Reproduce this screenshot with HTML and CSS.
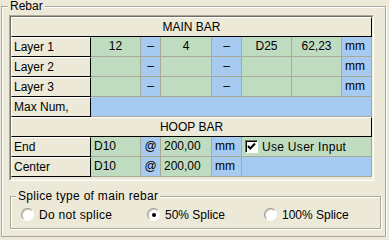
FILE: index.html
```html
<!DOCTYPE html>
<html>
<head>
  <title>Rebar</title>
  <link rel="stylesheet" href="styles.css">
</head>
<body>
  <div class="group rebar">
    <span class="caption">Rebar</span>

    <div class="grid">
      <div class="grid-in">
        <div class="row"><div class="head">MAIN BAR</div></div>

        <div class="row">
          <div class="lbl">Layer 1</div>
          <div class="c g">12</div>
          <div class="c b">–</div>
          <div class="c g">4</div>
          <div class="c b">–</div>
          <div class="c g">D25</div>
          <div class="c g">62,23</div>
          <div class="c b l">mm</div>
        </div>

        <div class="row">
          <div class="lbl">Layer 2</div>
          <div class="c g"></div>
          <div class="c b">–</div>
          <div class="c g"></div>
          <div class="c b">–</div>
          <div class="c g"></div>
          <div class="c g"></div>
          <div class="c b l">mm</div>
        </div>

        <div class="row">
          <div class="lbl">Layer 3</div>
          <div class="c g"></div>
          <div class="c b">–</div>
          <div class="c g"></div>
          <div class="c b">–</div>
          <div class="c g"></div>
          <div class="c g"></div>
          <div class="c b l">mm</div>
        </div>

        <div class="row">
          <div class="lbl">Max Num,</div>
          <div class="c b wide"></div>
        </div>

        <div class="row"><div class="head">HOOP BAR</div></div>

        <div class="row">
          <div class="lbl">End</div>
          <div class="c g l">D10</div>
          <div class="c b">@</div>
          <div class="c g l">200,00</div>
          <div class="c b l">mm</div>
          <div class="c g rest chk">
            <span class="box">
              <svg width="9" height="9" viewBox="0 0 9 9"><path d="M1 4 L3.3 6.5 L8 1.5" fill="none" stroke="#000" stroke-width="2"/></svg>
            </span>
            <span class="wide-text">Use User Input</span>
          </div>
        </div>

        <div class="row">
          <div class="lbl">Center</div>
          <div class="c g l">D10</div>
          <div class="c b">@</div>
          <div class="c g l">200,00</div>
          <div class="c b l">mm</div>
          <div class="c b rest"></div>
        </div>
      </div>
    </div>

    <!-- Splice type -->
    <div class="group splice">
      <span class="caption wide-text">Splice type of main rebar</span>
      <div class="options">
        <div class="opt"><span class="radio"></span><span class="wide-text">Do not splice</span></div>
        <div class="opt"><span class="radio on"></span><span>50% Splice</span></div>
        <div class="opt"><span class="radio"></span><span>100% Splice</span></div>
      </div>
    </div>
  </div>
</body>
</html>
```

FILE: styles.css
```css
body {
  margin: 0;
  background-color: #ece9d8;
  font-family: "Liberation Sans", Arial, sans-serif;
  font-size: 12px;
  color: #000;
}

.wide-text {
  letter-spacing: 0.3px;
}

.group {
  position: relative;
  box-sizing: border-box;
  border: 1px solid #aca899;
  box-shadow: 1px 1px 0 #fff, inset 1px 1px 0 #fff;
}

.caption {
  position: absolute;
  top: -8px;
  left: 6px;
  padding: 0 2px;
  line-height: 14px;
  background-color: #ece9d8;
}

.rebar {
  width: 385px;
  height: 231px;
  margin: 6px 0 0 1px;
  padding: 8px 0 0 7px;
}

.grid {
  box-sizing: border-box;
  width: 365px;
  height: 166px;
  border: 1px solid;
  border-color: #aca899 #fff #fff #aca899;
}

.grid-in {
  box-sizing: border-box;
  height: 100%;
  border: 1px solid;
  border-color: #716f64 #f1efe2 #f1efe2 #716f64;
}

.row {
  display: grid;
  grid-template-columns: 80px 50px 20px 51px 30px 50px 50px 30px;
  height: 20px;
}

.row > div {
  box-sizing: border-box;
  line-height: 18px;
  white-space: nowrap;
  overflow: hidden;
}

.lbl, .head {
  background-color: #ece9d8;
  border-top: 1px solid #fff;
  border-left: 1px solid #fff;
  border-right: 1px solid #000;
  border-bottom: 1px solid #000;
  padding-left: 2px;
}

.head {
  grid-column: 1 / -1;
  text-align: center;
  padding-left: 0;
}

.c {
  border-right: 1px solid #aca899;
  border-bottom: 1px solid #aca899;
  text-align: center;
}

.l {
  text-align: left;
  padding-left: 3px;
}

.g { background-color: #c0dcc0; }
.b { background-color: #a6caf0; }

.wide { grid-column: 2 / -1; }
.rest { grid-column: 6 / -1; }

.chk {
  display: flex;
  align-items: center;
  gap: 4px;
  padding-left: 3px;
}

.box {
  box-sizing: border-box;
  width: 13px;
  height: 13px;
  display: flex;
  align-items: center;
  justify-content: center;
  background-color: #fff;
  border: 1px solid;
  border-color: #716f64 #fff #fff #716f64;
  box-shadow: inset 1px 1px 0 #000;
}

.splice {
  width: 371px;
  height: 33px;
  margin: 15px 0 0 1px;
}

.splice .caption {
  left: 5px;
}

.options {
  display: grid;
  grid-template-columns: 126px 117px auto;
  padding: 11px 0 0 10px;
}

.opt {
  display: flex;
  align-items: center;
  gap: 5px;
  height: 13px;
}

.radio {
  box-sizing: border-box;
  width: 13px;
  height: 13px;
  border-radius: 50%;
  border: 1px solid;
  border-color: #9a978a #fff #fff #9a978a;
  background-color: #fff;
  box-shadow: inset 1px 1px 0 #d4d0c8;
  display: flex;
  align-items: center;
  justify-content: center;
}

.radio.on::after {
  content: "";
  width: 4px;
  height: 4px;
  border-radius: 50%;
  background-color: #000;
}
```
